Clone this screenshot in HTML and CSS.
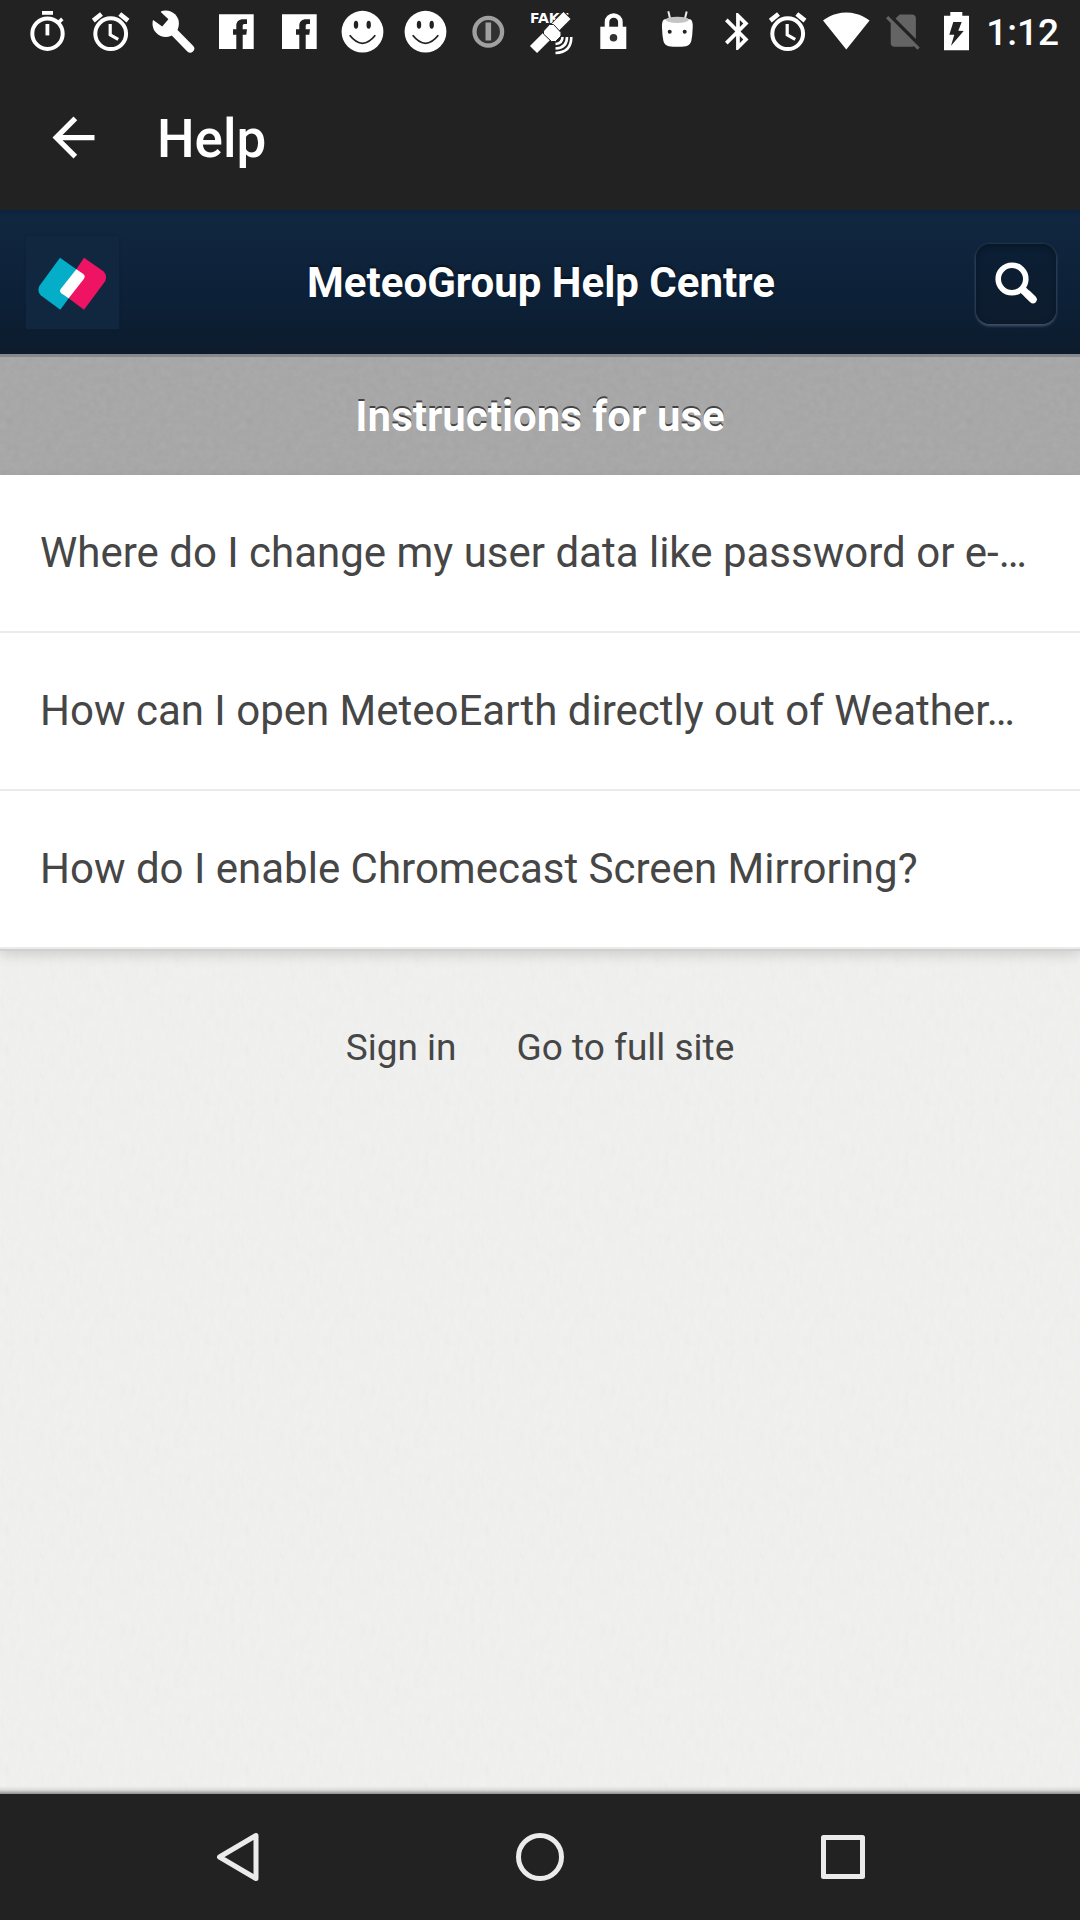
FILE: index.html
```html
<!DOCTYPE html>
<html lang="en">
<head>
<meta charset="utf-8">
<meta name="viewport" content="width=device-width, initial-scale=1">
<title>Help</title>
<link rel="stylesheet" href="styles.css">
</head>
<body>
<svg class="defs" aria-hidden="true">
  <symbol id="alarm" viewBox="0 0 63 64">
    <g fill="none" stroke="#fff">
      <circle cx="31.7" cy="33.7" r="15.4" stroke-width="4"/>
      <path d="M31.2 24v10.8l8 4.6" stroke-width="3.2"/>
      <path d="M14.3 20.6l8.2-6.6M49 20.6L40.8 14" stroke-width="4.6"/>
    </g>
  </symbol>
  <symbol id="facebook" viewBox="0 0 63 64">
    <path fill="#fff" d="M14 14.3h34.7V49H14z"/>
    <path fill="#222" d="M31.3 49V34.7H28v-5.4h3.3V26c0-4.6 2.7-6.7 6.7-6.7h4V24h-2.5c-1.5 0-1.8.8-1.8 2.3v3H42l-.7 5.4h-3.6V49z"/>
  </symbol>
  <symbol id="smiley" viewBox="0 0 63 64">
    <circle cx="31.5" cy="31.7" r="20.9" fill="#fff"/>
    <ellipse cx="25" cy="24.7" rx="2.2" ry="4" fill="#222"/>
    <ellipse cx="37.7" cy="24.7" rx="2.2" ry="4" fill="#222"/>
    <path d="M18.7 35.3q12.8 16 25.6 0" fill="none" stroke="#222" stroke-width="1.8"/>
  </symbol>
</svg>

<div class="statusbar">
  <div class="notices">
    <svg class="slot" viewBox="0 0 63 64"><g fill="none" stroke="#fff"><circle cx="31.5" cy="33.7" r="15.2" stroke-width="4"/><path d="M31.4 24v11.4" stroke-width="3.8"/><path d="M26 12.9h11" stroke-width="3.8"/><path d="M42.5 22.5l3.8-3.6" stroke-width="3.6"/></g></svg>
    <svg class="slot"><use href="#alarm"/></svg>
    <svg class="slot" viewBox="0 0 63 64"><circle cx="23.7" cy="23.7" r="13.2" fill="#fff"/><path d="M27 27l21.2 21.6" stroke="#fff" stroke-width="8" stroke-linecap="round"/><path fill="#222" d="M18.4 8l.6 4.3 7.4 7-6.2 7.200-8.700-6.300L8 19V8z"/></svg>
    <svg class="slot"><use href="#facebook"/></svg>
    <svg class="slot"><use href="#facebook"/></svg>
    <svg class="slot"><use href="#smiley"/></svg>
    <svg class="slot"><use href="#smiley"/></svg>
    <svg class="slot" viewBox="0 0 63 64"><circle cx="31.3" cy="31.7" r="13.8" fill="#303030" stroke="#a0a0a0" stroke-width="4.3"/><path d="M31.3 22.5v18" stroke="#a0a0a0" stroke-width="5.6"/></svg>
    <svg class="slot" viewBox="0 0 63 64"><text class="fake" x="10" y="23">FAKE</text><path d="M13 50l35-35" stroke="#222" stroke-width="12"/><path d="M13.500 49.500l13-13M35 27.500l12-12" stroke="#fff" stroke-width="10"/><path d="M23.500 31l6-6.500h4l7.500 8v3.500l-5.500 5.500h-4L23.500 34z" fill="#fff" stroke="#222"/><g fill="none" stroke="#fff" stroke-width="2.6"><path d="M42.500 37q0 6.500-7 7"/><path d="M47 37q0 11-11.500 11.500"/><path d="M51.300 37q0 15.500-15.800 16"/></g></svg>
    <svg class="slot" viewBox="0 0 63 64"><path d="M24 28v-6a6.700 6.500 0 0 1 13.400 0v6" fill="none" stroke="#fff" stroke-width="4.6"/><path fill="#fff" d="M17.300 26.700h26V49h-26z"/><circle cx="30.500" cy="37.700" r="3.800" fill="#333"/></svg>
    <svg class="slot" viewBox="0 0 63 64"><path d="M22.300 11.300l1.700 7M40.700 11.600L39 18.300" stroke="#eee" stroke-width="2"/><path fill="#fff" d="M18 19.500q13.300-4 26.700 0 2.300 1.500 2 8-.2 8-1.400 13.500-1.300 4.500-5.300 5.200-8.700 1-17.300 0-4-.7-5.300-5.200Q16.200 35.500 16 27.500q-.3-6.500 2-8z"/><ellipse cx="31.300" cy="19.800" rx="11.500" ry="3.100" fill="#c4c4c4"/><circle cx="23.700" cy="31.700" r="2" fill="#222"/><circle cx="38.700" cy="31.700" r="2" fill="#222"/></svg>
  </div>
  <div class="system">
    <svg width="46" height="64" viewBox="0 0 46 64"><path fill="#fff" transform="translate(5.750 9.300) scale(1.850)" d="M17.710 7.710L12 2h-1v7.590L6.410 5 5 6.410 10.590 12 5 17.590 6.410 19 11 14.410V22h1l5.710-5.710-4.300-4.290 4.300-4.290zM13 5.830l1.880 1.880L13 9.590V5.830zm1.880 10.460L13 18.170v-3.760l1.880 1.880z"/></svg>
    <svg class="slot"><use href="#alarm"/></svg>
    <svg width="55" height="64" viewBox="0 0 55 64"><path fill="#fff" transform="translate(3.300 6.500) scale(2)" d="M12.010 21.490L23.640 7c-.450-.340-4.930-4-11.640-4C5.280 3 .810 6.660.360 7l11.630 14.490.010.010.010-.010z"/></svg>
    <svg width="58" height="64" viewBox="0 0 58 64"><path fill="#646464" transform="translate(7.700 9) scale(1.800)" d="M18.990 5c0-1.100-.890-2-1.990-2h-7L7.660 5.340 19 16.680 18.990 5zM3.650 3.880L2.380 5.150 5 7.770V19c0 1.100.9 2 2 2h10.010c.350 0 .670-.1.960-.260l1.880 1.880 1.270-1.270L3.650 3.880z"/></svg>
    <svg width="54" height="64" viewBox="0 0 54 64"><path fill="#fff" d="M12 15.700h6.300V12h12v3.700H37v34.600H12z"/><path fill="#222" d="M21.300 22h8.400l-3.400 8.700 5.400.3L19 45.700l3.300-11h-5z"/></svg>
    <span class="time">1:12</span>
  </div>
</div>

<header class="appbar">
  <button class="back" type="button" aria-label="Back"><svg width="63" height="63" viewBox="0 0 24 24"><path fill="#fff" d="M20 11H7.830l5.590-5.590L12 4l-8 8 8 8 1.410-1.410L7.830 13H20v-2z"/></svg></button>
  <h1 class="apptitle">Help</h1>
</header>

<main class="page">
  <div class="sitebar">
    <a class="logo" href="#" aria-label="MeteoGroup"><svg width="93" height="93" viewBox="78 460 279 279"><path fill="#04aec8" d="M180 525l49 35-23 87-25 34-59-43q-11-11-4-28z"/><path fill="#ee1463" d="M252 525l58 41q12 11 6 29l-64 86-46-34 23-87z"/><path fill="#fff" d="M229 560l21 14q7 6 2 14l-46 59-22-15q-7-6-2-13z"/></svg></a>
    <h2 class="sitename">MeteoGroup Help Centre</h2>
    <button class="search" type="button" aria-label="Search"><svg width="44" height="44" viewBox="0 0 44 44"><circle cx="18" cy="17" r="13.8" fill="none" stroke="#fff" stroke-width="5.600"/><path d="M28 27l11 10.500" stroke="#fff" stroke-width="7.500"/><path d="M34 32.500l5 5" stroke="#fff" stroke-width="7.500" stroke-linecap="round"/></svg></button>
  </div>
  <h3 class="section">Instructions for use</h3>
  <ul class="topics">
    <li><a href="#">Where do I change my user data like password or e-…</a></li>
    <li><a href="#">How can I open MeteoEarth directly out of Weather…</a></li>
    <li><a href="#">How do I enable Chromecast Screen Mirroring?</a></li>
  </ul>
  <div class="links">
    <a href="#">Sign in</a>
    <a href="#">Go to full site</a>
  </div>
</main>

<nav class="navbar">
  <button type="button" aria-label="Back"><svg width="52" height="52" viewBox="0 0 52 52"><path d="M44 4.500v43L7.500 26z"/></svg></button>
  <button type="button" aria-label="Home"><svg width="52" height="52" viewBox="0 0 52 52"><circle cx="26" cy="26" r="21.500"/></svg></button>
  <button type="button" aria-label="Recent apps"><svg width="52" height="52" viewBox="0 0 52 52"><path d="M7.500 6.500h39v39h-39z"/></svg></button>
</nav>
</body>
</html>
```
FILE: styles.css
```css
* { box-sizing: border-box; }
body {
  margin: 0;
  min-height: 100vh;
  display: flex;
  flex-direction: column;
  background: #222;
  color: #464646;
  font-family: Roboto, "Liberation Sans", sans-serif;
}
h1, h2, h3, ul { margin: 0; padding: 0; }
button { padding: 0; border: 0; background: none; cursor: pointer; }
a { color: inherit; text-decoration: none; }
svg { display: block; }
.defs { position: absolute; width: 0; height: 0; }

.statusbar {
  display: flex;
  justify-content: space-between;
  height: 64px;
  padding: 0 21px 0 16px;
  color: #fff;
}
.notices, .system { display: flex; align-items: center; }
.slot { width: 63px; height: 64px; }
.fake { font: bold 14px "DejaVu Sans", sans-serif; fill: #fff; }
.time { padding-top: 2px; font-size: 37px; line-height: 64px; font-weight: 500; }

.appbar {
  display: flex;
  align-items: center;
  gap: 52px;
  height: 146px;
  padding: 0 42px;
  color: #fff;
}
.apptitle { padding-top: 4px; font-size: 53px; line-height: 64px; font-weight: 500; }

.page {
  flex: 1;
  background:
    linear-gradient(to top, #8c8e8c, rgba(200, 200, 200, 0.5) 4px, transparent 8px),
    url("data:image/svg+xml,%3Csvg xmlns='http://www.w3.org/2000/svg' width='240' height='240'%3E%3Cfilter id='n' x='0' y='0' width='100%25' height='100%25'%3E%3CfeTurbulence type='fractalNoise' baseFrequency='.2 .08' numOctaves='2' stitchTiles='stitch'/%3E%3CfeColorMatrix type='saturate' values='0'/%3E%3C/filter%3E%3Crect width='240' height='240' filter='url(%23n)' opacity='.07'/%3E%3C/svg%3E"),
    #f1f1f0;
}
.sitebar {
  display: grid;
  grid-template-columns: 1fr auto 1fr;
  align-items: center;
  height: 144px;
  padding: 0 24px 0 26px;
  background: linear-gradient(#0c2340, #11273f 8px, #0c2138 60%, #0d1b2c);
  color: #fff;
}
.logo { justify-self: start; background: #11273f; box-shadow: 0 0 2px #0d2036; }
.sitename { padding-top: 2px; font-size: 42px; line-height: 48px; font-weight: 700; text-shadow: 0 -2px 2px #07131f; }
.search {
  justify-self: end;
  display: grid;
  place-items: center;
  width: 80px;
  height: 80px;
  margin-top: 4px;
  border-radius: 14px;
  background: linear-gradient(#0b1e34, #0d1c2d);
  box-shadow: 0 0 3px #33455a, 0 2px 3px #4b596b, inset 0 2px 5px #081626;
}
.section {
  height: 121px;
  padding-top: 36px;
  border-top: 3px solid #85888c;
  background:
    url("data:image/svg+xml,%3Csvg xmlns='http://www.w3.org/2000/svg' width='240' height='240'%3E%3Cfilter id='n' x='0' y='0' width='100%25' height='100%25'%3E%3CfeTurbulence type='fractalNoise' baseFrequency='.15' numOctaves='2' stitchTiles='stitch'/%3E%3CfeColorMatrix type='saturate' values='0'/%3E%3C/filter%3E%3Crect width='240' height='240' filter='url(%23n)' opacity='.12'/%3E%3C/svg%3E"),
    #a6a6a6;
  color: #fff;
  font-size: 42px;
  line-height: 48px;
  font-weight: 700;
  text-align: center;
  text-shadow: 0 -2px 0 #444;
}
.topics {
  list-style: none;
  background: #fff;
  box-shadow: 0 2px 0 #d0d0d0, 0 6px 12px rgba(0, 0, 0, 0.14);
}
.topics li { border-bottom: 2px solid #ebebeb; }
.topics a {
  display: block;
  padding: 54px 40px;
  overflow: hidden;
  font-size: 42px;
  line-height: 48px;
  white-space: nowrap;
  text-overflow: ellipsis;
}
.links {
  display: flex;
  justify-content: center;
  gap: 60px;
  padding: 77px 40px;
  font-size: 37px;
  line-height: 44px;
}

.navbar {
  display: flex;
  height: 126px;
  padding: 0 8%;
  background: #222;
}
.navbar button { flex: 1; display: grid; place-items: center; }
.navbar svg { fill: none; stroke: #ebebeb; stroke-width: 5; stroke-linejoin: round; }
```
